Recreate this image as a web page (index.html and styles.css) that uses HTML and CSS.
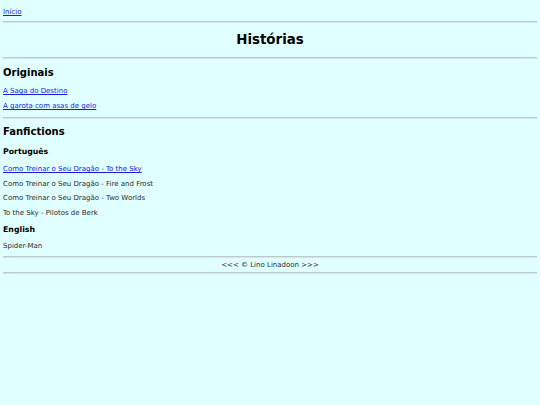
FILE: index.html
```html
<!DOCTYPE html>
<html lang="pt">
<head>
<meta charset="utf-8">
<title>Histórias</title>
<link rel="stylesheet" href="styles.css">
</head>
<body>
<nav class="nav"><a href="#">Início</a></nav>
<hr class="rule rule-top">
<h1 class="title">Histórias</h1>
<hr class="rule rule-title">
<section class="section">
  <h2 class="section-title section-first">Originais</h2>
  <div class="list list-originals">
    <a class="item" href="#">A Saga do Destino</a>
    <a class="item" href="#">A garota com asas de gelo</a>
  </div>
</section>
<hr class="rule rule-mid">
<section class="section">
  <h2 class="section-title">Fanfictions</h2>
  <h3 class="lang">Português</h3>
  <div class="list">
    <a class="item" href="#">Como Treinar o Seu Dragão - To the Sky</a>
    <span class="item">Como Treinar o Seu Dragão - Fire and Frost</span>
    <span class="item">Como Treinar o Seu Dragão - Two Worlds</span>
    <span class="item">To the Sky - Pilotos de Berk</span>
  </div>
  <h3 class="lang lang-en">English</h3>
  <div class="list list-en">
    <span class="item">Spider-Man</span>
  </div>
</section>
<hr class="rule rule-foot">
<footer class="footer">&lt;&lt;&lt; © Lino Linadoon &gt;&gt;&gt;</footer>
<hr class="rule rule-end">
</body>
</html>
```
FILE: styles.css
```css
html {
  background: #e0ffff;
}
body {
  margin: 0 3px;
  padding-top: 6px;
  font-family: "DejaVu Sans", Verdana, sans-serif;
  font-size: 7px;
  color: #2a2a2a;
}
a {
  color: #1a1ae0;
  text-decoration: underline;
}
.nav {
  line-height: 12px;
}
.rule {
  margin: 0;
  height: 0;
  border: 0;
  border-top: 1px solid #bccaca;
  border-bottom: 1px solid #d2e6e6;
}
.rule-top { margin-top: 3px; }
.title {
  margin: 9px 0 0;
  font-size: 13.4px;
  line-height: 16px;
  text-align: center;
  color: #000;
}
.rule-title { margin-top: 9px; }
.section {
  display: flex;
  flex-direction: column;
}
.section-title {
  margin: 7px 0 0;
  font-size: 10px;
  line-height: 12px;
  color: #000;
}
.section-first { margin-top: 8px; }
.list {
  display: flex;
  flex-direction: column;
  align-items: flex-start;
  gap: 4.7px;
  margin-top: 7px;
  line-height: 10px;
}
.list-originals { gap: 5px; }
.rule-mid { margin-top: 6px; }
.lang {
  margin: 9px 0 0;
  font-size: 7.8px;
  line-height: 10px;
  color: #000;
}
.lang-en { margin-top: 7px; }
.list-en { margin-top: 6px; }
.rule-foot { margin-top: 5px; }
.footer {
  margin-top: 2px;
  line-height: 10px;
  text-align: center;
}
.rule-end { margin-top: 2px; }
```
